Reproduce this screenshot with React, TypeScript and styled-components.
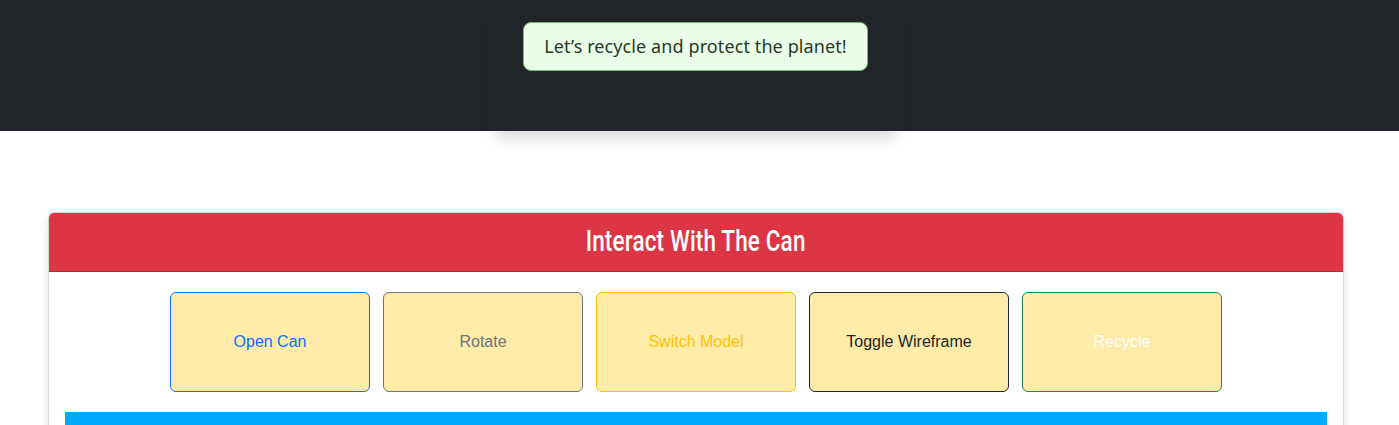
import styled, { createGlobalStyle } from 'styled-components';

const GlobalStyle = createGlobalStyle`
  body {
    margin: 0;
    background: #ffffff;
    font-family: 'Liberation Sans', Arial, sans-serif;
  }
`;

const TopBar = styled.header`
  height: 131px;
  padding-right: 8px;
  background-color: #212529;
  display: flex;
  justify-content: center;
`;

const Banner = styled.div`
  width: 420px;
  display: flex;
  justify-content: center;
  align-items: flex-start;
  padding-top: 22px;
  box-shadow: 0 16px 16px -10px rgba(0, 0, 0, 0.16);
`;

const Alert = styled.div`
  padding: 11px 20px 12px;
  background-color: #e9fde9;
  border: 1px solid #6cc06c;
  border-radius: 8px;
  color: #283a24;
  font-family: 'Noto Sans', 'Open Sans', sans-serif;
  font-size: 18px;
  line-height: 24px;
  letter-spacing: 0.1px;
`;

const Main = styled.main`
  padding: 81px 55px 0 48px;
`;

const Card = styled.section`
  border: 1px solid #d8d8d8;
  border-radius: 6px;
  overflow: hidden;
  box-shadow: 0 4px 10px rgba(0, 0, 0, 0.12);
`;

const CardHeader = styled.div`
  height: 59px;
  padding-bottom: 4px;
  box-sizing: border-box;
  background-color: #dc3545;
  border-bottom: 1px solid #b52a37;
  display: flex;
  align-items: center;
  justify-content: center;
`;

const Title = styled.h2`
  margin: 0;
  color: #ffffff;
  font-family: Roboto, 'Liberation Sans', sans-serif;
  font-weight: 500;
  font-size: 30px;
  transform: scaleX(0.75);
  letter-spacing: 0.2px;
`;

const CardBody = styled.div`
  padding: 20px 16px 0;
`;

const ButtonRow = styled.div`
  display: flex;
  justify-content: center;
  gap: 13px;
`;

const ActionButton = styled.button<{ $tone: string; $text?: string }>`
  width: 200px;
  height: 100px;
  background-color: #feeca8;
  border: 1px solid ${(p) => p.$tone};
  border-radius: 6px;
  color: ${(p) => p.$text ?? p.$tone};
  font-family: 'Liberation Sans', Arial, sans-serif;
  font-size: 16px;
  cursor: pointer;
`;

const Stage = styled.div`
  margin-top: 20px;
  height: 40px;
  background-color: #00aaff;
`;

const buttons = [
  { label: 'Open Can', tone: '#0d6efd' },
  { label: 'Rotate', tone: '#6c757d' },
  { label: 'Switch Model', tone: '#ffc107' },
  { label: 'Toggle Wireframe', tone: '#212529' },
  { label: 'Recycle', tone: '#198754', text: '#ffffff' },
];

export default function App() {
  return (
    <>
      <GlobalStyle />
      <TopBar>
        <Banner>
          <Alert>Let’s recycle and protect the planet!</Alert>
        </Banner>
      </TopBar>
      <Main>
        <Card>
          <CardHeader>
            <Title>Interact With The Can</Title>
          </CardHeader>
          <CardBody>
            <ButtonRow>
              {buttons.map((b) => (
                <ActionButton key={b.label} $tone={b.tone} $text={b.text}>
                  {b.label}
                </ActionButton>
              ))}
            </ButtonRow>
            <Stage />
          </CardBody>
        </Card>
      </Main>
    </>
  );
}
